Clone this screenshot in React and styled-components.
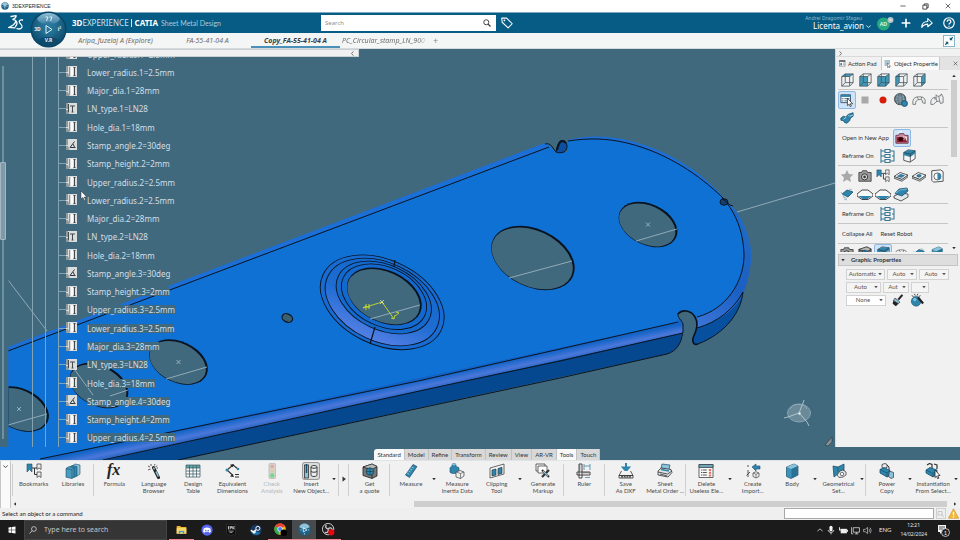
import React from "react";
import styled, { createGlobalStyle } from "styled-components";

const teal = "#41697e";
const ink = "#0a1420";
const ui = '"Lato", "Noto Sans", sans-serif';
const wide = '"Noto Sans", sans-serif';

const GlobalStyle = createGlobalStyle`
  * { box-sizing: border-box; }
  body { margin: 0; font: 6px/8px ${ui}; color: #333; background: ${teal}; }
  button, input, select { font: inherit; color: inherit; border: 0; margin: 0; padding: 0; background: none; border-radius: 0; }
  button { cursor: pointer; }
  svg { display: block; flex: none; }
`;

/* ---------- layout ---------- */

const Page = styled.div`
  height: 100vh;
  display: grid;
  grid-template-rows: 12px 21px 16px 1fr 48px 12px 20px;
  overflow: hidden;
`;

const TitleBar = styled.header`
  display: flex;
  align-items: center;
  gap: 3px;
  padding: 0 9px 0 1px;
  background: #fff;
  color: #222;
  font: 5px/8px "Liberation Sans", sans-serif;
`;
const WindowButtons = styled.div`
  margin-left: auto;
  display: flex;
  gap: 16px;
`;

const Banner = styled.div`
  position: relative;
  display: flex;
  align-items: center;
  padding: 0 5px 0 8px;
  background: #065c84;
  border-top: 1px solid #7ba9c0;
  color: #fff;
`;
const Compass = styled.button`
  position: absolute;
  left: 30px;
  top: -2px;
  z-index: 3;
`;
const Brand = styled.h1`
  margin: 0 0 0 48px;
  width: 249px;
  display: flex;
  align-items: center;
  font: 400 8px/12px ${wide};
  white-space: nowrap;
  color: #d5e5ee;
  b { color: #fff; }
`;
const BrandSplit = styled.i`
  width: 1px;
  height: 8px;
  margin: 0 3px 0 2px;
  background: #d5e5ee;
`;
const Role = styled.span`
  margin-left: 3px;
  font: 7px/12px ${ui};
  color: #a9cbdc;
`;
const Search = styled.form`
  display: flex;
  align-items: center;
  width: 175px;
  height: 16px;
  padding: 0 5px 0 4px;
  background: #fff;
  margin-right: 5px;
  input { flex: 1; min-width: 0; height: 14px; outline: 0; font: 6px/12px ${wide}; color: #333; }
  input::placeholder { color: #8f8f8f; opacity: 1; }
  button { color: #333; }
`;
const Account = styled.div`
  margin-left: auto;
  text-align: right;
  font: 5px/6px ${wide};
  color: #8fb9cd;
`;
const Space = styled.button`
  display: flex;
  align-items: center;
  gap: 2px;
  margin-left: auto;
  margin-right: -9px;
  font: 8px/10px ${wide};
  color: #fff;
`;
const BannerTools = styled.div`
  display: flex;
  align-items: center;
  gap: 10px;
  margin-left: 15px;
`;
const AvatarButton = styled.button`
  margin-right: -3px;
`;

const Tabs = styled.nav`
  display: flex;
  align-items: stretch;
  padding: 0 5px 0 67px;
  background: #f4f5f5;
  border-bottom: 1px solid #d5dadd;
`;
const DocTab = styled.button`
  width: ${(p) => p.$w}px;
  padding-top: 1px;
  font: italic ${(p) => (p.$active ? 700 : 400)} 7px/13px ${wide};
  color: ${(p) => (p.$active ? "#3d3d3d" : "#6c6c6c")};
  white-space: nowrap;
  overflow: hidden;
  border-bottom: 2px solid ${(p) => (p.$active ? "#4a90b8" : "transparent")};
  ${(p) => p.$fade && "text-align: left; padding-left: 2px; mask-image: linear-gradient(90deg, #000 88%, transparent);"}
`;
const AddTab = styled.button`
  padding: 0 5px;
  color: #8c8c8c;
  font: 9px/14px ${wide};
`;
const ShrinkButton = styled.button`
  margin: 2px 0 1px auto;
  align-self: center;
`;

const Stage = styled.main`
  position: relative;
  display: grid;
  grid-template-rows: 1fr 13px;
  min-height: 0;
  background: ${teal};
  overflow: hidden;
`;
const Scene = styled.svg`
  position: absolute;
  left: 0;
  top: 0;
  width: 100%;
  height: 100%;
`;
const Work = styled.div`
  position: relative;
  display: flex;
  min-height: 0;
`;
const TreePane = styled.section`
  flex: 1;
  min-width: 0;
  display: flex;
  flex-direction: column;
`;
const TreeBar = styled.div`
  width: 359px;
  height: 8px;
  flex: none;
  display: flex;
  justify-content: flex-end;
  align-items: center;
  padding-right: 3px;
  background: #f0f0f0;
  border: solid #c9cfd2;
  border-width: 1px 1px 1px 0;
`;
const TreeBody = styled.div`
  flex: 1;
  min-height: 0;
  display: flex;
  overflow: hidden;
`;
const TreeScroll = styled.div`
  width: 8px;
  display: flex;
  justify-content: center;
  padding: 9px 0 8px;
  background: ${teal};
  &::before { content: ""; width: 2px; background: #6f929f; }
`;
const TreeThumb = styled.i`
  width: 6px;
  height: 78px;
  margin: 96px 0 0 -4px;
  border: 1px solid #a5b7c1;
  border-radius: 1px;
  background: #7f9aa8;
`;
const Branches = styled.div`
  width: 51px;
  display: flex;
  justify-content: flex-end;
  gap: 12px;
  i { width: 1px; background: #83a3b2; }
`;
const TreeList = styled.ul`
  margin: 0;
  padding: 0;
  list-style: none;
  align-self: flex-end;
  height: 402px;
  display: grid;
  grid-template-rows: repeat(22, 1fr);
`;
const TreeRow = styled.li`
  display: flex;
  align-items: center;
  &::before { content: ""; width: 7px; height: 1px; background: #83a3b2; }
`;
const TreeLabel = styled.button`
  margin-left: 10px;
  background: ${teal};
  color: #d2dfe5;
  font: 8px/9px ${wide};
  white-space: nowrap;
`;

const Panel = styled.aside`
  width: 125px;
  display: flex;
  flex-direction: column;
  background: #f1f1f1;
  border-left: 1px solid #d4dbdf;
`;
const PanelTop = styled.div`
  height: 8px;
  padding: 1px 0 0 2px;
  border-bottom: 1px solid #d9d9d9;
`;
const PanelTabs = styled.div`
  display: flex;
  height: 13px;
  background: #e3e3e3;
`;
const PanelTab = styled.button`
  display: flex;
  align-items: center;
  gap: 2px;
  width: ${(p) => p.$w}px;
  padding-left: ${(p) => (p.$active ? 3 : 2)}px;
  white-space: nowrap;
  color: #333;
  background: ${(p) => (p.$active ? "#f1f1f1" : "#fafafa")};
  border-right: 1px solid #c8c8c8;
`;
const PanelClose = styled.button`
  flex: 1;
  display: flex;
  align-items: center;
  justify-content: flex-end;
  padding-right: 2px;
`;
const PadArea = styled.div`
  height: 182px;
  display: flex;
  overflow: hidden;
`;
const Pad = styled.div`
  flex: 1;
  margin-left: 2px;
  overflow: hidden;
`;
const PadGroup = styled.div`
  padding-top: 1px;
  border-bottom: 1px solid #c6c6c6;
`;
const PadRow = styled.div`
  display: flex;
  align-items: center;
  height: 18px;
  gap: ${(p) => p.$gap || 0}px;
  padding-left: ${(p) => (p.$text ? 4 : 0)}px;
`;
const PadButton = styled.button`
  width: 18px;
  height: 18px;
  display: flex;
  align-items: center;
  justify-content: center;
  border-radius: 2px;
  border: 1px solid ${(p) => (p.$on ? "#8db9e6" : "transparent")};
  background: ${(p) => (p.$on ? "#cfe3f8" : "none")};
`;
const PadScroll = styled.div`
  width: 12px;
  display: flex;
  flex-direction: column;
  align-items: center;
  padding: 4px 0 2px;
`;
const PadThumb = styled.i`
  width: 6px;
  height: 77px;
  margin: 2px 0 auto;
  background: #cdcdcd;
`;
const PropHead = styled.h2`
  display: flex;
  align-items: center;
  gap: 6px;
  height: 12px;
  margin: 2px 2px;
  padding-left: 2px;
  border: 1px solid #c4c4c4;
  background: #dedede;
  font: 700 6px/8px ${ui};
  color: #333;
`;
const PropRows = styled.div`
  display: grid;
  gap: 1px;
  padding: 0 10px;
`;
const PropRow = styled.div`
  display: flex;
  align-items: center;
  gap: 2px;
  height: 12px;
`;
const Field = styled.label`
  width: ${(p) => p.$w}px;
  height: 11px;
  display: flex;
  align-items: center;
  border: 1px solid #d2d2d2;
  background: ${(p) => (p.$white ? "#fff" : "#f4f4f4")};
  color: #555;
  select { appearance: none; flex: 1; min-width: 0; height: 9px; text-align: center; text-align-last: center; outline: 0; }
  svg { margin: 0 2px 0 0; pointer-events: none; }
`;

const RibbonTabs = styled.nav`
  position: relative;
  display: flex;
  align-self: end;
  height: 11px;
  margin-left: 39%;
`;
const RibbonTab = styled.button`
  padding: 0 3px;
  background: ${(p) => (p.$active ? "#f8f8f8" : "#d8d8d8")};
  border-right: 1px solid #c2c2c2;
  color: #333;
  &:first-child { border-top-left-radius: 3px; }
`;

const Ribbon = styled.div`
  display: flex;
  background: #f1f1f1;
  border-top: 1px solid #dfe4e6;
  overflow: hidden;
`;
const RibbonGrip = styled.button`
  width: 11px;
  display: flex;
  justify-content: center;
  padding-top: 3px;
  background: #fafafa;
  border: solid #c5c5c5;
  border-width: 0 1px;
`;
const RibbonMain = styled.div`
  flex: 1;
  min-width: 0;
  display: flex;
  flex-direction: column;
  padding-left: 1px;
`;
const Commands = styled.div`
  flex: 1;
  display: flex;
  align-items: flex-start;
`;
const Command = styled.button`
  flex: 1 1 0;
  min-width: 0;
  display: flex;
  flex-direction: column;
  align-items: center;
  gap: 1px;
  padding-top: 2px;
  font: 6px/7px ${ui};
  color: ${(p) => (p.disabled ? "#b5b5b5" : "#4c4c4c")};
  white-space: pre;
`;
const CommandIcon = styled.span`
  border-radius: 2px;
  box-shadow: ${(p) => (p.$on ? "0 0 0 1px #999" : "none")};
  background: ${(p) => (p.$on ? "#dcdcdc" : "none")};
`;
const Separator = styled.i`
  width: 1px;
  height: 32px;
  margin: 3px 1px 0 0;
  background: #d0d0d0;
`;
const CaretButton = styled.button`
  width: ${(p) => p.$w || 7}px;
  height: 36px;
  display: flex;
  align-items: center;
  justify-content: center;
`;
const RibbonScroll = styled.div`
  height: 8px;
  display: flex;
  align-items: center;
  justify-content: space-between;
  padding: 0 3px 0 1px;
`;
const RibbonThumb = styled.i`
  width: 56.5%;
  height: 6px;
  margin-left: auto;
  margin-right: 6px;
  background: #cecece;
`;

const Status = styled.footer`
  display: flex;
  align-items: center;
  gap: 2px;
  padding: 0 2px 1px 2px;
  background: #efefef;
  color: #222;
  span { margin-right: auto; }
  input { width: 150px; height: 11px; background: #fff; border: 1px solid #a8a8a8; padding: 0 2px; }
`;
const StatusButton = styled.button`
  width: 10px;
  height: 11px;
  display: flex;
  align-items: center;
  justify-content: center;
  border: 1px solid ${(p) => (p.$flat ? "transparent" : "#cfcfcf")};
`;

const Taskbar = styled.div`
  display: flex;
  align-items: stretch;
  background: #1b1b1c;
  color: #e6e6e6;
`;
const TaskButton = styled.button`
  width: ${(p) => p.$w || 25}px;
  display: flex;
  align-items: center;
  justify-content: center;
  background: ${(p) => (p.$on ? "#474b4e" : "none")};
  border-bottom: 1px solid ${(p) => (p.$run ? "#f48592" : "transparent")};
`;
const TaskSearch = styled.label`
  width: 143px;
  display: flex;
  align-items: center;
  gap: 7px;
  padding-left: 4px;
  margin-right: 2px;
  background: #353536;
  border: 1px solid #444;
  input { flex: 1; min-width: 0; outline: 0; font: 7px/12px ${wide}; }
  input::placeholder { color: #c4c4c4; opacity: 1; }
`;
const Tray = styled.div`
  margin-left: auto;
  display: flex;
  align-items: center;
  gap: 3px;
  padding-right: 10px;
`;
const Language = styled.button`
  margin: 0 1px 0 4px;
`;
const Clock = styled.time`
  margin: 0 7px 0 5px;
  font: 5px/9px ${wide};
  text-align: center;
`;

/* ---------- drawings ---------- */

const B = "#2f86ad";
const L = "#8cc3da";
const D = "#1c4f6b";

const shapes = {
  bookmarks: (<><path d="M1 1h5v8L3.500 6.500 1 9z" fill={B} stroke={D} strokeWidth=".6" /><path d="M11 1h4v5.500l-2-1.700-2 1.700zM11 9h4v5.500l-2-1.700-2 1.700z" fill="#eee" stroke="#444" strokeWidth=".8" /><path d="M6 5h2.500v6.500H11M8.500 5H11" fill="none" stroke="#333" strokeWidth="1" /></>),
  libraries: (<><path d="M7 3l3-2 5 1v9l-3 2-5-1z" fill={L} stroke={D} strokeWidth=".6" /><path d="M4 4.500l3-2 5 1V13l-3 1.500-5-1z" fill={B} stroke={D} strokeWidth=".6" /><path d="M1 5.500l3-2 5 1.200V14l-2 1.500-6-1.300z" fill="#4a9cbd" stroke={D} strokeWidth=".6" /><path d="M1 5.500l6 1.300V15.500M7 6.800l2-2" fill="none" stroke={D} strokeWidth=".6" /></>),
  language: (<><path d="M7.500 4.500l5 10" stroke="#222" strokeWidth="3" strokeLinecap="round" /><path d="M7.500 4.500l1 2M10 8.500l2.300 5" stroke={L} strokeWidth="1.600" /><path d="M2 3l2 1M5 1v2M9 1l-.5 1.500M11 2.500L9.800 4M2 7l2.500-1M12 5h-1.500" stroke="#333" strokeWidth=".8" /></>),
  table: (<><path d="M1 2h14v12H1z" fill="#fbfbfb" /><path d="M1 2h14v3H1z" fill="#58a5a5" /><path d="M1 2h14v12H1zM1 5h14M1 8h14M1 11h14M4.500 2v12M8 2v12M11.500 2v12" fill="none" stroke="#47656d" strokeWidth=".8" /></>),
  equiv: (<><path d="M9 2L3 7l6 5.500M9 2l5 4" fill="none" stroke="#333" strokeWidth="1.100" /><path d="M10 1l-4 .8 2.500 2.500zM6 13.500l4 .5-1.500-3z" fill="#222" /><circle cx="3" cy="7" r="1.500" fill={B} /><circle cx="14" cy="6" r="1.300" fill={B} /><path d="M11 11.500h4M11 14h4" stroke="#333" strokeWidth="1.100" /></>),
  check: (<><rect x="5" y=".5" width="6.500" height="15" rx="1" fill="#d8d2cb" stroke="#b9b3ac" strokeWidth=".7" /><circle cx="8.200" cy="3.500" r="1.800" fill="#e4a8a0" /><circle cx="8.200" cy="8" r="1.800" fill="#d7cfa6" /><circle cx="8.200" cy="12.500" r="2.200" fill="#73d98b" /></>),
  insert: (<><rect x="1.500" y="2" width="4" height="13" fill={L} stroke="#333" strokeWidth=".8" /><path d="M3.500 1v9" stroke={D} strokeWidth="1.500" /><path d="M8 4c0-2 6-2 6 0v8c0 2-6 2-6 0zM8 4c0 1.700 6 1.700 6 0M8 8c0 1.700 6 1.700 6 0" fill="#eee" stroke="#333" strokeWidth=".9" /></>),
  quote: (<><path d="M1 4l9-3 5 2.500V13l-5 2.500-9-3z" fill="#777" stroke="#222" strokeWidth=".8" /><path d="M1 4l9 2.500V15.500M10 6.500l5-3" fill="none" stroke="#222" strokeWidth=".8" /><path d="M1 4l9-3 5 2.500-5 3z" fill="#b9b9b9" stroke="#222" strokeWidth=".6" /><circle cx="8" cy="8.500" r="3.700" fill={B} stroke="#0f3850" strokeWidth=".7" /><path d="M4.500 8.500h7M8 5v7" stroke="#0f3850" strokeWidth=".6" /></>),
  measure: (<><path d="M2.500 12L10 1.500l4 2L6.500 14.500z" fill={B} stroke={D} strokeWidth=".7" /><path d="M4 10l2 1M5.500 8l2 1M7 6l2 1M8.500 4l2 1" stroke="#d6eef7" strokeWidth=".6" /></>),
  inertia: (<><path d="M1 5c0-1 2-1.500 2-1.500V1.500c0-1 4-1 4 0v2S10 4 10 5v4c0 2-9 2-9 0z" fill={B} stroke={D} strokeWidth=".6" /><ellipse cx="5" cy="1.600" rx="2" ry=".8" fill={L} /><path d="M7 9l4-1.500L15 9v4l-3.500 2.500L7 14z" fill="#eceff0" stroke="#444" strokeWidth=".7" /><path d="M7 9l4.500 1.500v5M11.500 10.500L15 9" fill="none" stroke="#444" strokeWidth=".6" /></>),
  clipping: (<><path d="M1 5l14-4v10L1 15z" fill="#f3f5f6" stroke="#444" strokeWidth=".8" /><path d="M3 7l4-1v6l-4 1zM9 5.500l4-1.200v6L9 11.500z" fill={B} stroke="#222" strokeWidth=".6" /></>),
  markup: (<><path d="M1 1h9v7H1z" fill="#f6f6f6" stroke="#444" strokeWidth=".8" /><path d="M3 3h9v7H3z" fill="#fff" stroke="#444" strokeWidth=".8" /><path d="M7 7l7 7M14 7l-7 7" stroke="#333" strokeWidth="2.200" /><path d="M8 8l5 5" stroke={L} strokeWidth="1.200" /></>),
  ruler: (<><path d="M3 1h3v14H3zM1 9h13v3H1z" fill="#f5f5f5" stroke="#333" strokeWidth=".9" /><path d="M3 3h1.500M3 5h1.500M3 7h1.500M8 9v1.500M10 9v1.500M12 9v1.500" stroke="#333" strokeWidth=".7" /><path d="M8 3h6M14 1v6M8 1v6M9 14.500h5" stroke="#4788a6" strokeWidth=".8" /></>),
  save: (<><path d="M8 0v6M5 4.500L8 8l3-3.500z" fill={B} stroke={B} strokeWidth="2" /><path d="M3.500 8L1 12.500h14L12.500 8M1 12.500h14v2.500H1z" fill="#f3f3f3" stroke="#333" strokeWidth=".8" /><path d="M3 13.800h10" stroke="#333" strokeWidth="1.200" strokeDasharray="2 .7" /></>),
  sheet: (<><path d="M4 5l1-4 8 1-1 5z" fill={L} stroke={D} strokeWidth=".7" /><path d="M1 8l3-3 10 1.500 1 3-4 4.500L1 12z" fill="#dfe3e5" stroke="#333" strokeWidth=".8" /><path d="M1 9l9.500 2L15 8M3 11l7 1.800" fill="none" stroke="#333" strokeWidth=".8" /><path d="M4 6.500l8 1.500" stroke={B} strokeWidth="1.500" /></>),
  remove: (<><path d="M1 1.500h14v13H1z" fill="#fafafa" stroke="#444" strokeWidth=".8" /><path d="M1 1.500h14v3H1z" fill="#6ca7bd" stroke="#444" strokeWidth=".8" /><path d="M3 7h6M3 9.500h6M3 12h6" stroke="#444" strokeWidth=".9" strokeDasharray="1.200 .6 4" /><path d="M12 6v8" stroke="#e0705f" strokeWidth="2.300" strokeDasharray="2 .8" /></>),
  create: (<><path d="M7 4l4-3v2h4v3h-4v2z" fill={B} stroke={D} strokeWidth=".6" /><circle cx="3" cy="3" r="1" fill="#888" /><path d="M3 7v7M1.500 12.500L5 9" stroke="#444" strokeWidth=".9" /><path d="M8 10l3-1.300 3 1.300v3.500L11 15l-3-1.500z" fill="#eee" stroke="#444" strokeWidth=".7" /><path d="M8 10l3 1.300V15M11 11.300L14 10" fill="none" stroke="#444" strokeWidth=".6" /></>),
  body: (<><path d="M2.500 4L10 1l4 2v9L7 15.500l-4.500-2z" fill="#3b93b8" stroke={D} strokeWidth=".7" /><path d="M2.500 4L10 1l4 2-6.500 3z" fill={L} /><path d="M7.500 6l6.500-3v9L7.500 15.500z" fill="#2a7195" /></>),
  geom: (<><path d="M2 3l5 1 6-3v7l-5 2-5 4z" fill={B} stroke={D} strokeWidth=".8" /><path d="M7 4v5" stroke={D} strokeWidth=".7" /><path d="M6 12l3-4 3-1 3 2v3l-3 2-4 .5z" fill="#e6e9ea" stroke="#444" strokeWidth=".8" /><circle cx="11" cy="11" r="1.700" fill="#fff" stroke="#444" strokeWidth=".7" /></>),
  power: (<><path d="M3 1.500l3-1 2 1v3l-3 1-2-1z" fill="#eee" stroke="#333" strokeWidth=".8" /><path d="M8 2l2 2v3" stroke="#333" fill="none" /><path d="M1 6.500l4-2 6 3v5l-3 1.500-7-4z" fill={B} stroke={D} strokeWidth=".8" /><path d="M1 6.500L8 10v4M8 10l3-2.500" fill="none" stroke={D} strokeWidth=".7" /><path d="M10.500 8l4 1.500v5l-2.500 1-2.500-2z" fill={L} stroke="#333" strokeWidth=".7" /></>),
  instance: (<><path d="M2 2l2.500-1.500L7 1.500v4M9 1l3 1v4" fill="none" stroke="#333" strokeWidth="1.200" /><path d="M1 7l4-2.500L12 7v4l-4 3-7-4z" fill={B} stroke={D} strokeWidth=".8" /><path d="M1 7l7 3.500V14M8 10.500L12 7" fill="none" stroke={D} strokeWidth=".7" /><path d="M10 7l5 5.500-2.200.2 1 2.500-1.200.5-1-2.500L10 14.500z" fill="#fff" stroke="#222" strokeWidth=".8" /></>),
  listOn: (<><path d="M1 2h11v9H1z" fill="#fff" stroke="#235" strokeWidth=".9" /><path d="M1 2h11v2.500H1z" fill={B} /><path d="M2 6.500h2M5 6.500h6M2 9h2M5 9h6" stroke={D} strokeWidth=".9" /><path d="M8.500 6v8.500l2-1.700 1.200 2.700 1.300-.6-1.200-2.600H14.500z" fill="#fff" stroke="#222" strokeWidth=".8" /></>),
  stop: <rect x="4" y="4" width="8" height="8" fill="#a9a9a9" />,
  record: <circle cx="8" cy="8" r="4" fill="#d81e0b" />,
  globe: (<><circle cx="7" cy="7" r="6.500" fill="#56707e" stroke="#333" strokeWidth=".8" /><path d="M1 7h12M7 1v12M3 3.500c3 2 5.500 2 8.500 0M3 11c3-2.500 5.500-2.500 8.500 0M4.500 1.500c-2 3.500-2 7.500 0 11M9.500 1.500c2 3.500 2 7.500 0 11" fill="none" stroke="#a9bcc6" strokeWidth=".6" /><circle cx="12" cy="12" r="3.400" fill={B} stroke={D} /></>),
  bend: (<><path d="M1 13c-.5-5 1-8 5-8.500 4-.5 8 0 9 3.500v4l-3-1c0-3-1-4-4-3.500C5 8 4 9.500 4 13z" fill="#eceff0" stroke="#555" strokeWidth=".8" /><path d="M6 4.500l1.500 3M11 4.500l-.5 3" stroke="#555" strokeWidth=".7" /></>),
  twist: (<><path d="M1 13c-.5-5 1-7 4-8l2 1V2l2 2 3-1 1-2 2 4v6l-3 1-1-3-4 1-3 3z" fill="#eceff0" stroke="#555" strokeWidth=".8" /><path d="M7 6l1 4M10 4l1 5M5 5l1 3" stroke="#555" strokeWidth=".7" /></>),
  robot: (<><path d="M1 8l3-2 3 1 2-3 6-2v4l-3 2-1 3-3 3-3-1-1-2-3-.5z" fill={B} stroke={D} strokeWidth=".9" /><path d="M9 4l2 2 4-1.500M4 9.500l3-2.500" stroke="#d9edf5" strokeWidth=".8" fill="none" /></>),
  app: (<><path d="M1 5h3l1-2h5l1 2h4v9H1z" fill="#c98fa0" stroke="#60283a" strokeWidth=".9" /><path d="M2 7h12v6H2z" fill="#8e1e3b" /><circle cx="6.500" cy="9.500" r="2.600" fill="#300" /><path d="M9 7h4v4M13 7l-3 3M3 2l5-1.500" stroke="#fff" strokeWidth="1" fill="none" /></>),
  tree: (<path d="M2 1v14M2 3h4M2 8h4M2 13h4M6 1.500h5v3H6zM6 6.500h5v3H6zM6 11.500h5v3H6zM11 3h4v10h-4M13 8h2" fill="none" stroke="#3b7893" strokeWidth="1.100" />),
  window: (<><path d="M2 4l5-3 8 1v9l-6 4-7-2z" fill="#f4f6f7" stroke="#333" strokeWidth=".9" /><path d="M2 4l5-3 8 1v3l-5.500 4L2 7z" fill={B} /><path d="M2 4l7.500 2V15M9.500 6L15 2" fill="none" stroke="#333" strokeWidth=".8" /></>),
  star: (<path d="M8 1l2.200 4.700 5 .6-3.700 3.500 1 5.100L8 12.400l-4.500 2.500 1-5.100L.8 6.300l5-.6z" fill="#a9a9a9" />),
  camera: (<><path d="M1 4h3l1-2h5l1 2h4v10H1z" fill="#9b9b9b" stroke="#333" strokeWidth=".9" /><circle cx="7.500" cy="9" r="3.500" fill="#ddd" stroke="#222" /><circle cx="7.500" cy="9" r="1.500" fill="#333" /></>),
  plate: (<><path d="M0 8.500L7 4l9 3-7 5z" fill="#f5f7f8" stroke="#333" strokeWidth=".9" /><path d="M0 8.500v2L9 14l7-5V7l-7 5z" fill="#cdd7db" stroke="#333" strokeWidth=".8" /><path d="M4 8.300l3.500-2.300 4.500 1.500-3.500 2.300z" fill={B} stroke={D} strokeWidth=".6" /></>),
  plateRound: (<><path d="M0 8.500L7 4l9 3-7 5z" fill="#f5f7f8" stroke="#333" strokeWidth=".9" /><path d="M0 8.500v2L9 14l7-5V7l-7 5z" fill="#cdd7db" stroke="#333" strokeWidth=".8" /><ellipse cx="8" cy="7.800" rx="2.600" ry="1.500" fill={B} stroke={D} strokeWidth=".6" /></>),
  dial: (<><path d="M2 2l10-1 3 2v11l-11 1-2-2z" fill="#f2f4f5" stroke="#333" strokeWidth=".9" /><circle cx="8.500" cy="8.500" r="4" fill="#fff" stroke="#333" strokeWidth=".8" /><path d="M8.500 8.500V4.500a4 4 0 0 1 0 8z" fill={B} /></>),
  chip: (<><path d="M3 8l5-4 6 2-5 5z" fill={B} stroke={D} strokeWidth=".8" /><path d="M4 11l4 1.500M10 3l3 1M2 6l3 5M5 13l3 1" stroke="#8ab" strokeWidth=".8" /></>),
  dish: (<><path d="M0 8l5-4h6l5 4v2l-5 3.500H5L0 10z" fill="#f8f9f9" stroke="#333" strokeWidth=".9" /><path d="M1.500 10h13l-4 3h-5z" fill={B} /></>),
  slab: (<><path d="M1 10l7-3 7 1v3l-7 4-7-3z" fill="#e4e9eb" stroke="#333" strokeWidth=".8" /><path d="M2 7.500L6 3l8-1 1 3-6 5z" fill={B} stroke={D} strokeWidth=".8" /><path d="M3 7l4-3 7-1" stroke={L} fill="none" strokeWidth=".8" /></>),
  brush: (<><path d="M14 1L9 7" stroke="#222" strokeWidth="2.500" /><path d="M5 5l6 5-2 2-6-4z" fill={L} stroke="#222" strokeWidth=".8" /><path d="M3 8l6 4-3 3-4-3z" fill="#222" /></>),
  ball: (<><circle cx="7" cy="9.500" r="5.500" fill={B} stroke={D} strokeWidth=".7" /><circle cx="5.500" cy="7.500" r="1.800" fill={L} /><path d="M9 5l6 7" stroke="#222" strokeWidth="2.500" /><path d="M5 1l1 2M9 1l-1 2M12 3l-2 1M2 3l2 1" stroke="#333" strokeWidth="1" /></>),
  pad: (<><path d="M1 1h13v13H1z" fill="#fff" stroke="#444" /><path d="M1 1h13v3H1z" fill="#444" /><path d="M3 7h4v5H3z" fill={B} /><path d="M9 7h4M9 10h4" stroke="#444" /></>),
  props: (<><path d="M1 2h11M1 6h11M1 10h6" stroke="#4c7f97" strokeWidth="1.800" /><path d="M7 6v9l2-2 1 3 1.500-.5-1-3H13z" fill="#fff" stroke="#333" strokeWidth=".9" /></>),
  windows: (<path d="M1 3l6-1v5.500H1zM8 1.900L15 1v6.500H8zM1 8.500h6V14l-6-.9zM8 8.500h7V15l-7-.9z" fill="#fff" />),
  folder: (<><path d="M1 3h5l1.500 1.500H15V14H1z" fill="#f2b632" /><path d="M1 6h14v8H1z" fill="#fbd968" /><path d="M4 10h8v4H4z" fill="#3f9ad8" /><path d="M6 12h4v2H6z" fill="#fbd968" /></>),
  discord: (<><circle cx="8" cy="8" r="7.500" fill="#5865f2" /><path d="M4 5.500c2-1.300 6-1.300 8 0 .8 1.500 1.200 3 1 5l-2 1-.8-1.200H5.800L5 11.500l-2-1c-.2-2 .2-3.500 1-5z" fill="#fff" /><circle cx="6.300" cy="8.500" r="1" fill="#5865f2" /><circle cx="9.700" cy="8.500" r="1" fill="#5865f2" /></>),
  epic: (<><path d="M2 .5h12v12L8 15.500 2 12.500z" fill="#080808" stroke="#555" strokeWidth=".5" /><path d="M4.500 3v4M4.500 3.400H6M4.500 5H6M4.500 6.800H6M7.500 3v4M7.500 3.400H9V5H7.500M10.300 3v4M13 3.500h-1.400v3.200H13" stroke="#fff" strokeWidth=".9" fill="none" /><path d="M4.500 9.500h7M6 11.500h4" stroke="#ddd" strokeWidth=".9" /></>),
  steam: (<><circle cx="8" cy="8" r="7.500" fill="#17375d" /><path d="M1 9.500c2 5 9 7 13 2L8 10z" fill="#1f78b4" /><circle cx="10.500" cy="5.800" r="2.700" fill="none" stroke="#fff" strokeWidth="1.300" /><path d="M8 8l-3 2.500M1 8.500l4 2" stroke="#fff" strokeWidth="2.200" /><circle cx="5.500" cy="11" r="1.800" fill="#fff" /></>),
  chrome: (<><circle cx="7.500" cy="7.500" r="7" fill="#fbbc05" /><path d="M7.500 7.500L1.400 4a7 7 0 0 1 12.200 0z" fill="#ea4335" /><path d="M7.500 7.500L1.400 4a7 7 0 0 0 4.600 10.400z" fill="#34a853" /><circle cx="7.500" cy="7.500" r="3.300" fill="#fff" /><circle cx="7.500" cy="7.500" r="2.500" fill="#4285f4" /><circle cx="12" cy="12" r="4" fill="#000" /></>),
  orb: (<><circle cx="8" cy="8" r="7.500" fill="#1d6288" /><path d="M1.500 5a7 7 0 0 1 13 0C11 8 5 8 1.500 5z" fill="#8fc3db" /><path d="M6.500 6v5L11 8.500z" fill="none" stroke="#e6f3f9" strokeWidth="1" /><path d="M3 8.500h1.500M12 8.500h1.500M8 12.500v1.500" stroke="#cfe6f0" /></>),
  obs: (<><circle cx="7.500" cy="7.500" r="7" fill="#222" stroke="#c9c9c9" strokeWidth="1.200" /><path d="M7.500 7.500c-3-1-4-3-2-5M7.500 7.500c2-2.500 5-1.500 5 1M7.500 7.500c1 3-1 5-4 4" stroke="#c9c9c9" strokeWidth="1.600" fill="none" /><circle cx="11.500" cy="11.500" r="3.800" fill="#e5060f" /></>),
  mic: (<><rect x="5.500" y="1" width="5" height="9" rx="2.500" fill="#f3f3f3" /><path d="M3.500 8c0 5 9 5 9 0M8 12v3" stroke="#f3f3f3" strokeWidth="1.300" fill="none" /></>),
  battery: (<><path d="M3 5h11v8H3z" fill="#eee" /><path d="M1 2v5h5M14 7.500h1.500v3" stroke="#eee" strokeWidth="1.800" fill="none" /></>),
  network: (<path d="M4 3h11v8H4zM7 14h6M10 11v3M1 2v12h3" fill="none" stroke="#e8e8e8" strokeWidth="1.300" />),
  sound: (<path d="M1 6h3l4-3.500v11L4 10H1zM10.500 5c1.500 2 1.500 4 0 6M12.500 3c2.500 3 2.500 7 0 10" fill="none" stroke="#d0d0d0" strokeWidth="1.200" />),
  warn: (<><path d="M8 1l7.500 14H.5z" fill="#f6b93b" stroke="#c98a1b" strokeWidth=".8" /><path d="M8 5.500v5M8 12v1.800" stroke="#fff" strokeWidth="1.800" /></>),
  lens: (<><circle cx="6.500" cy="6.500" r="5" fill="none" stroke="currentColor" strokeWidth="1.800" /><path d="M10.300 10.300L15 15" stroke="currentColor" strokeWidth="2.400" /></>),
  lensLeft: (<><circle cx="9.800" cy="6" r="4.800" fill="none" stroke="currentColor" strokeWidth="1.400" /><path d="M6.300 9.500L1 15" stroke="currentColor" strokeWidth="1.500" /></>),
  close: <path d="M2 2l12 12M14 2L2 14" stroke="currentColor" strokeWidth="1.800" />,
  minimize: <path d="M1 8h14" stroke="currentColor" strokeWidth="1.800" />,
  restore: <path d="M2 5h9v9H2zM5 5V2h9v9h-3" fill="none" stroke="currentColor" strokeWidth="1.800" />,
  left: <path d="M11 1L5 8l6 7" fill="none" stroke="currentColor" strokeWidth="2" />,
  right: <path d="M5 1l6 7-6 7" fill="none" stroke="currentColor" strokeWidth="2" />,
  down: <path d="M1 5l7 6 7-6" fill="none" stroke="currentColor" strokeWidth="2.600" />,
  up: <path d="M1 11l7-6 7 6" fill="none" stroke="currentColor" strokeWidth="2" />,
  triDown: <path d="M1 4h14l-7 9z" fill="currentColor" />,
  triUp: <path d="M1 12h14L8 3z" fill="currentColor" />,
  triRight: <path d="M4 1v14l9-7z" fill="currentColor" />,
  triLeft: <path d="M12 1v14L3 8z" fill="currentColor" />,
  plus: <path d="M8 1v14M1 8h14" stroke="currentColor" strokeWidth="2.600" />,
  share: <path d="M1 14c0-5 3-8 8-8V2l6 6-6 5V9.500c-4 0-6 1.500-8 4.500z" fill="none" stroke="currentColor" strokeWidth="1.400" strokeLinejoin="round" />,
  help: (<><circle cx="8" cy="8" r="7" fill="none" stroke="currentColor" strokeWidth="1.600" /><path d="M5.500 6.200c0-3.200 5-3.200 5 0C10.500 8 8 8 8 10M8 11.500v1.500" fill="none" stroke="currentColor" strokeWidth="1.700" /></>),
  tag: (<><path d="M1 1.500h6.500L15 9l-5.500 5.500L1.500 7z" fill="none" stroke="currentColor" strokeWidth="1.400" strokeLinejoin="round" /><circle cx="4.500" cy="4.500" r="1.200" fill="currentColor" /></>),
  shrink: (<><path d="M.5.5h15v15H.5z" fill="#fff" stroke="#4a8fb5" strokeWidth="1" /><path d="M9 7V3l4 4zM7 9v4L3 9z" fill="#145879" /><path d="M10 6l3-3M6 10l-3 3" stroke="#145879" strokeWidth="1.500" /></>),
  page: <path d="M2 3h8v7H2zM9 9l5 5" fill="none" stroke="#bbb" strokeWidth="1.500" />,
};

const faces = [
  "M2 4l4-3h9l-4 3z",
  "M2 4h9v11H2z",
  "M2 4h9v11H2zM11 4l4-3v10l-4 4z",
  "M2 4l4-3v10l-4 4z",
  "M11 4l4-3v10l-4 4z",
];

function Icon({ name, size = 16 }) {
  return <svg width={size} height={size} viewBox="0 0 16 16" aria-hidden="true">{shapes[name]}</svg>;
}

function CubeIcon({ face }) {
  return (
    <svg width="14" height="14" viewBox="0 0 16 16" aria-hidden="true">
      <path d={faces[face]} fill="#4199ba" />
      <path d="M2 4h9v11H2zM2 4l4-3h9l-4 3M15 1v10l-4 4M6 1v10h9M6 11l-4 4" fill="none" stroke="#44525a" strokeWidth=".9" />
    </svg>
  );
}

function FormulaIcon() {
  return (
    <svg width="16" height="16" viewBox="0 0 16 16" aria-hidden="true">
      <text x="1" y="12" fontFamily="Liberation Serif" fontStyle="italic" fontWeight="700" fontSize="16" fill="#222">fx</text>
    </svg>
  );
}

function ParamIcon({ kind }) {
  return (
    <svg width="11" height="12" viewBox="0 0 11 12" aria-hidden="true">
      <path d="M0 0h11v11H0z" fill="#dcdedd" />
      <path d="M0 7h2l1.500 4H0zM0 0h2v6H0z" fill="#8f9a9f" />
      {kind === "T" && <path d="M4 3h5M6.500 3v6M5.500 9h2M2.500 1v8" stroke="#43494c" strokeWidth="1" fill="none" />}
      {kind === "A" && <path d="M8.500 2.500L4 8.500H9.500M7 5l1.500 3" stroke="#33393c" strokeWidth="1" fill="none" />}
      {!kind && <><path d="M5 1h2v9H5z" fill="#fbfbfb" /><path d="M8.500 2v7M7.500 1.500h2M7.500 9.500h2" stroke="#43494c" strokeWidth="1" /><path d="M3.500 1v9" stroke="#8a9397" fill="none" /></>}
    </svg>
  );
}

function CompassDial() {
  return (
    <svg width="37" height="37" viewBox="0 0 37 37" aria-hidden="true">
      <defs>
        <radialGradient id="dial" cx=".5" cy=".35" r=".65">
          <stop offset="0" stopColor="#3483a6" />
          <stop offset="1" stopColor="#0b4a6d" />
        </radialGradient>
        <linearGradient id="dialTop" x2="0" y2="1">
          <stop offset="0" stopColor="#8fbdd3" />
          <stop offset="1" stopColor="#3f82a6" />
        </linearGradient>
      </defs>
      <circle cx="18.500" cy="18.500" r="18" fill="#0b4666" />
      <circle cx="18.500" cy="18.500" r="16.500" fill="url(#dial)" />
      <path d="M7 8C12 0 25 0 30 8c-2 4-6 5-11.500 5S9 12 7 8z" fill="url(#dialTop)" />
      <path d="M8 29c5 8 16 8 21 0-5-4-16-4-21 0z" fill="#0d4a6c" />
      <circle cx="18.500" cy="18.500" r="7.500" fill="#22739890" />
      <path d="M16 14.500v8l6-4z" fill="none" stroke="#e8f3f8" strokeWidth="1" />
      <g fill="#e8f3f8" fontFamily="Noto Sans" fontWeight="700" fontSize="5" textAnchor="middle">
        <text x="7.500" y="20">3D</text>
        <text x="18.500" y="31">V.R</text>
        <text x="29.500" y="20">i²</text>
      </g>
      <path d="M15.500 6h2.500l-1.500 4M19.500 6h2.500l-1.500 4" fill="none" stroke="#e8f3f8" strokeWidth=".9" />
    </svg>
  );
}

function DsLogo() {
  return (
    <svg width="16" height="16" viewBox="0 0 16 16" fill="none" stroke="#fff" strokeWidth="1.300" strokeLinecap="round" aria-hidden="true">
      <path d="M3 1.500l5-.8c.5 1.500-1.500 3-3.500 4 4-.5 4 2.300 1 5L1 12.500l6 .3" />
      <path d="M7.500 11.500c1.500-1.800 2-4 .5-5.500" />
      <path d="M14.500 5c-2-.5-4 .5-3 2.500.8 1.500 3 2.500 2.500 4.500-.5 1.800-3 2.200-5 1.700" />
    </svg>
  );
}

function Avatar() {
  return (
    <svg width="17" height="15" viewBox="0 0 17 15" aria-hidden="true">
      <circle cx="6.500" cy="8" r="6.500" fill="#27a880" />
      <text x="6.500" y="10" fontSize="5" fontWeight="700" fontFamily="Lato" textAnchor="middle" fill="#e9fff7">AD</text>
      <circle cx="13.500" cy="4" r="3" fill="#b9c3c8" />
      <path d="M12.500 4h2" stroke="#fff" />
    </svg>
  );
}

const hole = (cx, cy, a, b) => (
  <g transform={`translate(${cx} ${cy}) rotate(25)`}>
    <ellipse rx={a} ry={b} fill={ink} />
    <ellipse cx="-.5" cy=".7" rx={a - 1.200} ry={b - 1.300} fill={teal} />
  </g>
);
const cross = (x, y) => <path d={`M${x - 2} ${y - 2}l4 4m0-4l-4 4`} stroke="#b8cdd6" strokeWidth=".7" />;

function Model() {
  return (
    <Scene viewBox="0 49 960 411" preserveAspectRatio="xMinYMin slice" aria-label="Sheet metal part">
      <defs>
        <linearGradient id="roll" gradientUnits="userSpaceOnUse" x1="400" y1="384" x2="403" y2="398">
          <stop offset="0" stopColor="#1263c6" />
          <stop offset=".5" stopColor="#4a78da" />
          <stop offset="1" stopColor="#1457b0" />
        </linearGradient>
        <linearGradient id="stamp" x1=".55" y1="0" x2=".6" y2="1">
          <stop offset="0" stopColor="#1268cc" />
          <stop offset=".55" stopColor="#1d6cd2" />
          <stop offset="1" stopColor="#547fe4" />
        </linearGradient>
        <linearGradient id="rim" gradientUnits="userSpaceOnUse" x1="700" y1="325" x2="751" y2="240">
          <stop offset="0" stopColor="#3a74d6" />
          <stop offset=".5" stopColor="#1a5fc2" />
          <stop offset="1" stopColor="#2068c4" />
        </linearGradient>
        <clipPath id="body">
          <path d="M8.500 49H960V460H0V447H8.500z" />
        </clipPath>
      </defs>
      <g clipPath="url(#body)">
        <path d="M0 499L178 460 667 354C677 351 681 343 683 333L684 318 0 470z" fill="#06488f" />
        <path d="M743 292C741 312 726 333 698 344 693 345 692 341 694 336L697 322 740 285z" fill="#07509f" />
        <path d="M0 483L683 333 683 318 0 468z" fill="url(#roll)" />
        <path d="M697 328C722 320 738 307 743 293 751 275 754 250 747 233L737 212 700 250 690 318z" fill="url(#rim)" />
        <path d="M0 350L545 143 549 145 556 152H567L568 140C590 135 606 136 627 140 668 150 702 172 723 197L737 212C748 230 751 245 751 258 750 275 735 310 697 323 697 315 692 311 685 311 679 310 676 314 678 322L0 468z" fill="#1b6fd6" />
        <path d="M743 293C751 275 754 250 747 233L737 212 728 206 740 240 742 275 712 310 697 318 697 328C722 320 738 307 743 293z" fill="url(#rim)" />
        <path d="M0 354L549 147 556 152H567L568 141C588 138 606 138 627 143 668 153 700 176 722 197 738 215 744 236 744 257 743 282 727 309 697 317 690 309 679 309 678 322L0 468z" fill="#1071d5" />
        <g fill="none" stroke={ink} strokeWidth="1">
          <path d="M0 354L549 147M545 144c4-1 6 1 8 4l3 4" />
          <path d="M568 141C588 138 606 138 627 143 668 153 700 176 722 197 738 215 744 236 744 257 743 282 727 309 697 317" />
          <path d="M678 322L560 349 418 381 40 459" />
          <path d="M683 333L560 361 470 380 103 460" />
          <path d="M178 460L560 378 667 354C677 351 681 343 683 333" />
          <path d="M698 344C726 333 741 312 743 292 734 309 718 322 697 328" />
        </g>
        <path d="M678 313C682 309 691 310 695 317 699 323 696 332 693 338V344H684L678 350C681 344 683 337 683 333V324C682 320 677 318 678 313z" fill={teal} />
        <path d="M683 333V324C682 320 677 318 678 313" fill="none" stroke={ink} strokeWidth="1" />
        <path d="M678 314C682 309 691 310 695 317 699 323 696 332 693 338 692 344 695 345 698 344" fill="none" stroke={ink} strokeWidth="1.600" />
        <path d="M556 152c2-9 4-13 8-11 4 2 4 9 0 11-3 1-6 1-8 0z" fill="#0b4f9e" stroke={ink} strokeWidth="1" />
        <path d="M557 150c2-9 5-11 9-7" fill="none" stroke={ink} strokeWidth="2" />
        <ellipse cx="724" cy="202" rx="4" ry="3.200" fill="#12406f" stroke={ink} />
        <path d="M722 198l8 7 3 1" stroke={ink} fill="none" />
        {hole(648, 224.5, 31, 20.5)}
        {hole(533, 258, 44, 29)}
        {hole(178.5, 362, 31, 20.5)}
        {hole(99, 385.5, 31, 20.5)}
        {hole(19.5, 409, 31, 20.5)}
        <g transform="rotate(25 287.300 318)">
          <ellipse cx="287.300" cy="318" rx="5.500" ry="4" fill="#3b5f70" stroke={ink} strokeWidth="1.200" />
        </g>
        <g fill="none" stroke={ink} strokeWidth=".9">
          <ellipse rx="65.300" ry="42.400" transform="translate(382.200 302.300) rotate(25)" fill="#176bd2" />
          <ellipse rx="60.200" ry="39.300" transform="translate(382.300 302) rotate(25)" fill="url(#stamp)" />
          <ellipse rx="50.200" ry="32.500" transform="translate(383.800 297.500) rotate(25)" fill="#1469ce" />
          <ellipse rx="45" ry="29.500" transform="translate(384 296.700) rotate(25)" />
          <path d="M375 327l-5 17M395 260l-1 7" strokeWidth="1.200" />
        </g>
        {hole(384.3, 296.3, 39.6, 26)}
        <path d="M636 241l41-12M509 278l63-17M370 319l50-14M166 379l41-12M110 396l18-6M8 425l39-11M737 212l98-29M8 280l39 51M75 370l18 25" stroke="#a3bbc6" strokeWidth=".8" />
        {cross(648, 224.5)}
        {cross(178.5, 362)}
        {cross(19, 409)}
        <path d="M363 308l19-6 12 17M366 304v6M369 304v5M366 307h4M363 308l3-2M394 319l-3-1M394 319l1-4M395 316l4-3-3-1" fill="none" stroke="#c6dc2a" strokeWidth=".9" />
        <path d="M380 300l4 4m0-4l-4 4" stroke="#eef7b0" strokeWidth=".7" />
      </g>
      <g stroke="#93adb9" strokeWidth=".8" fill="#6a8a9a">
        <ellipse cx="799" cy="413" rx="11.500" ry="9" />
        <path d="M799 413l-11 4M799 413l8 9M799 413l4-10M784 418l4-1M803 403l1-3M807 422l2 4" stroke="#c3d3da" />
        <path d="M790 409a9 7 0 0 1 17 0" fill="none" />
        <circle cx="799.500" cy="413.500" r="1.300" fill="#fff" />
      </g>
      <path d="M825 445l7-8v5l-4 4z" fill="#8a9297" stroke="#333b40" strokeWidth=".7" />
      <path d="M81 191v8l2-1.600 1.300 3 1.200-.5-1.200-2.900h2.400z" fill="#fff" stroke="#333" strokeWidth=".5" />
    </Scene>
  );
}

/* ---------- data ---------- */

const tree = [
  ["Upper_radius.1=2.5mm"], ["Lower_radius.1=2.5mm"], ["Major_dia.1=28mm"], ["LN_type.1=LN28", "T"], ["Hole_dia.1=18mm"],
  ["Stamp_angle.2=30deg", "A"], ["Stamp_height.2=2mm"], ["Upper_radius.2=2.5mm"], ["Lower_radius.2=2.5mm"], ["Major_dia.2=28mm"],
  ["LN_type.2=LN28", "T"], ["Hole_dia.2=18mm"], ["Stamp_angle.3=30deg", "A"], ["Stamp_height.3=2mm"], ["Upper_radius.3=2.5mm"],
  ["Lower_radius.3=2.5mm"], ["Major_dia.3=28mm"], ["LN_type.3=LN28", "T"], ["Hole_dia.3=18mm"], ["Stamp_angle.4=30deg", "A"],
  ["Stamp_height.4=2mm"], ["Upper_radius.4=2.5mm"],
];

const ribbonTabs = ["Standard", "Model", "Refine", "Transform", "Review", "View", "AR-VR", "Tools", "Touch"];

const commands = [
  "|", ["bookmarks", "Bookmarks"], ["libraries", "Libraries"], "|",
  ["formula", "Formula"], ["language", "Language\nBrowser"], ["table", "Design\nTable"], ["equiv", "Equivalent\nDimensions"],
  ["check", "Check\nAnalysis"], ["insert", "Insert\nNew Object..."], "v", "|", ">", "|",
  ["quote", "Get\na quote"], "|",
  ["measure", "Measure"], "v", ["inertia", "Measure\nInertia Data"], ["clipping", "Clipping\nTool"], "v", ["markup", "Generate\nMarkup"], "|",
  ["ruler", "Ruler"], "|",
  ["save", "Save\nAs DXF"], ["sheet", "Sheet\nMetal Order ..."], "|",
  ["remove", "Delete\nUseless Ele..."], "v", ["create", "Create\nImport..."], ["body", "Body"], "v", ["geom", "Geometrical\nSet..."], "v", "|",
  ["power", "Power\nCopy"], "v", ["instance", "Instantiation\nFrom Select..."], "v",
];

function CommandItem({ item }) {
  if (item === "|") return <Separator />;
  if (item === "v") return <CaretButton aria-label="More"><Icon name="triDown" size={4} /></CaretButton>;
  if (item === ">") return <CaretButton $w={8} aria-label="Expand"><Icon name="triRight" size={6} /></CaretButton>;
  const [name, label] = item;
  return (
    <Command disabled={name === "check"}>
      <CommandIcon $on={name === "insert"}>{name === "formula" ? <FormulaIcon /> : <Icon name={name} />}</CommandIcon>
      {label}
    </Command>
  );
}

function PadIcons({ names, on }) {
  return (
    <PadRow>
      {names.map((n) => (
        <PadButton key={n} $on={n === on} aria-label={n}><Icon name={n} size={14} /></PadButton>
      ))}
    </PadRow>
  );
}

function Choice({ label, value, w, white }) {
  return (
    <Field $w={w} $white={white}>
      <select aria-label={label} defaultValue={value}><option>{value}</option></select>
      <Icon name="triDown" size={4} />
    </Field>
  );
}

export default function App() {
  return (
    <Page>
      <GlobalStyle />
      <TitleBar>
        <Icon name="orb" size={8} />
        3DEXPERIENCE
        <WindowButtons>
          <button aria-label="Minimize"><Icon name="minimize" size={6} /></button>
          <button aria-label="Restore"><Icon name="restore" size={7} /></button>
          <button aria-label="Close"><Icon name="close" size={6} /></button>
        </WindowButtons>
      </TitleBar>

      <Banner>
        <DsLogo />
        <Compass aria-label="Compass"><CompassDial /></Compass>
        <Brand><b>3D</b>EXPERIENCE<BrandSplit /><b>CATIA</b><Role>Sheet Metal Design</Role></Brand>
        <Search>
          <input aria-label="Search" placeholder="Search" />
          <button type="button" aria-label="Run search"><Icon name="lens" size={8} /></button>
        </Search>
        <button aria-label="Tags"><Icon name="tag" size={12} /></button>
        <Account>
          Andrei Dragomir Sfagau
          <Space>Licenta_avion<Icon name="down" size={5} /></Space>
        </Account>
        <BannerTools>
          <AvatarButton aria-label="Profile"><Avatar /></AvatarButton>
          <button aria-label="Add"><Icon name="plus" size={10} /></button>
          <button aria-label="Share"><Icon name="share" size={12} /></button>
          <button aria-label="Help"><Icon name="help" size={12} /></button>
        </BannerTools>
      </Banner>

      <Tabs>
        <DocTab $w={97}>Aripa_fuzelaj A (Explore)</DocTab>
        <DocTab $w={87}>FA-55-41-04 A</DocTab>
        <DocTab $w={89} $active>Copy_FA-55-41-04 A</DocTab>
        <DocTab $w={88} $fade>PC_Circular_stamp_LN_900</DocTab>
        <AddTab aria-label="New tab">+</AddTab>
        <ShrinkButton aria-label="Shrink"><Icon name="shrink" size={12} /></ShrinkButton>
      </Tabs>

      <Stage>
        <Model />
        <Work>
          <TreePane>
            <TreeBar><button aria-label="Collapse tree"><Icon name="left" size={5} /></button></TreeBar>
            <TreeBody>
              <TreeScroll><TreeThumb /></TreeScroll>
              <Branches><i /><i /><i /></Branches>
              <TreeList>
                {tree.map(([label, kind]) => (
                  <TreeRow key={label}><ParamIcon kind={kind} /><TreeLabel>{label}</TreeLabel></TreeRow>
                ))}
              </TreeList>
            </TreeBody>
          </TreePane>

          <Panel>
            <PanelTop><button aria-label="Collapse panel"><Icon name="right" size={5} /></button></PanelTop>
            <PanelTabs>
              <PanelTab $w={46} $active><Icon name="pad" size={7} />Action Pad</PanelTab>
              <PanelTab $w={58}><Icon name="props" size={8} />Object Propertie</PanelTab>
              <PanelClose aria-label="Close panel"><Icon name="close" size={5} /></PanelClose>
            </PanelTabs>
            <PadArea>
              <Pad>
                <PadGroup>
                  <PadRow>
                    {faces.map((f, i) => <PadButton key={f} aria-label={`View ${i + 1}`}><CubeIcon face={i} /></PadButton>)}
                  </PadRow>
                </PadGroup>
                <PadGroup>
                  <PadIcons names={["listOn", "stop", "record", "globe", "bend", "twist"]} on="listOn" />
                  <PadIcons names={["robot"]} />
                </PadGroup>
                <PadGroup>
                  <PadRow $text $gap={4}>Open in New App<PadButton $on aria-label="Open"><Icon name="app" size={14} /></PadButton></PadRow>
                  <PadRow $text $gap={4}>Reframe On<PadButton aria-label="Reframe tree"><Icon name="tree" /></PadButton><PadButton aria-label="Reframe view"><Icon name="window" size={14} /></PadButton></PadRow>
                </PadGroup>
                <PadGroup>
                  <PadIcons names={["star", "camera", "bookmarks", "plate", "plateRound", "dial"]} />
                  <PadRow>
                    {["chip", "dish", "dish", "slab"].map((n, i) => <PadButton key={i} aria-label={n}><Icon name={n} /></PadButton>)}
                  </PadRow>
                </PadGroup>
                <PadGroup><PadRow $text $gap={4}>Reframe On<PadButton aria-label="Reframe tree"><Icon name="tree" /></PadButton></PadRow></PadGroup>
                <PadGroup><PadRow $text $gap={8}><button>Collapse All</button><button>Reset Robot</button></PadRow></PadGroup>
                <PadIcons names={["camera", "quote", "window", "bend", "chip", "body"]} on="window" />
              </Pad>
              <PadScroll><Icon name="triUp" size={4} /><PadThumb /><Icon name="triDown" size={4} /></PadScroll>
            </PadArea>
            <PropHead><Icon name="triDown" size={4} />Graphic Properties</PropHead>
            <PropRows>
              <PropRow>
                <Choice label="Color" value="Automatic" w={39} />
                <Choice label="Transparency" value="Auto" w={30} />
                <Choice label="Line width" value="Auto" w={30} />
              </PropRow>
              <PropRow>
                <Choice label="Line type" value="Auto" w={35} />
                <Choice label="Point type" value="Aut" w={26} />
                <Choice label="Rendering" value="" w={18} />
              </PropRow>
              <PropRow>
                <Choice label="Layer" value="None" w={40} white />
                <PadButton aria-label="Painter"><Icon name="brush" size={13} /></PadButton>
                <PadButton aria-label="Wizard"><Icon name="ball" size={14} /></PadButton>
              </PropRow>
            </PropRows>
          </Panel>
        </Work>
        <RibbonTabs>
          {ribbonTabs.map((t) => <RibbonTab key={t} $active={t === "Standard" || t === "Tools"}>{t}</RibbonTab>)}
        </RibbonTabs>
      </Stage>

      <Ribbon>
        <RibbonGrip aria-label="Collapse bar"><Icon name="down" size={5} /></RibbonGrip>
        <RibbonMain>
          <Commands>{commands.map((c, i) => <CommandItem key={i} item={c} />)}</Commands>
          <RibbonScroll>
            <button aria-label="Scroll left"><Icon name="triLeft" size={4} /></button>
            <RibbonThumb />
            <button aria-label="Scroll right"><Icon name="triRight" size={4} /></button>
          </RibbonScroll>
        </RibbonMain>
      </Ribbon>

      <Status>
        <span>Select an object or a command</span>
        <input aria-label="Command" />
        <StatusButton aria-label="Find command"><Icon name="page" size={8} /></StatusButton>
        <StatusButton $flat aria-label="Warnings"><Icon name="warn" size={11} /></StatusButton>
      </Status>

      <Taskbar>
        <TaskButton $w={24} aria-label="Start"><Icon name="windows" size={8} /></TaskButton>
        <TaskSearch><Icon name="lensLeft" size={8} /><input aria-label="Type here to search" placeholder="Type here to search" /></TaskSearch>
        <TaskButton $run aria-label="Files"><Icon name="folder" size={11} /></TaskButton>
        <TaskButton aria-label="Discord"><Icon name="discord" size={12} /></TaskButton>
        <TaskButton $w={24} aria-label="Epic Games"><Icon name="epic" size={12} /></TaskButton>
        <TaskButton aria-label="Steam"><Icon name="steam" size={12} /></TaskButton>
        <TaskButton $w={24} $run aria-label="Chrome"><Icon name="chrome" size={13} /></TaskButton>
        <TaskButton $w={24} $run $on aria-label="3DEXPERIENCE"><Icon name="orb" size={13} /></TaskButton>
        <TaskButton $run aria-label="OBS"><Icon name="obs" size={13} /></TaskButton>
        <Tray>
          <button aria-label="Hidden icons"><Icon name="up" size={6} /></button>
          <button aria-label="Microphone"><Icon name="mic" size={10} /></button>
          <button aria-label="Battery"><Icon name="battery" size={9} /></button>
          <button aria-label="Network"><Icon name="network" size={9} /></button>
          <button aria-label="Volume"><Icon name="sound" size={9} /></button>
          <Language>ENG</Language>
          <Clock>12:21<br />14/02/2024</Clock>
          <button aria-label="Notifications">
            <svg width="13" height="13" viewBox="0 0 13 13" aria-hidden="true">
              <path d="M1 1h8v7H5L3 10V8H1z" fill="#f3f3f3" />
              <path d="M2 3h6M2 5h4" stroke="#222" strokeWidth=".8" />
              <circle cx="8.500" cy="8.500" r="4" fill="#222" stroke="#ddd" strokeWidth=".8" />
              <text x="8.500" y="10.500" fontSize="5" fontFamily="Lato" textAnchor="middle" fill="#fff">1</text>
            </svg>
          </button>
        </Tray>
      </Taskbar>
    </Page>
  );
}
